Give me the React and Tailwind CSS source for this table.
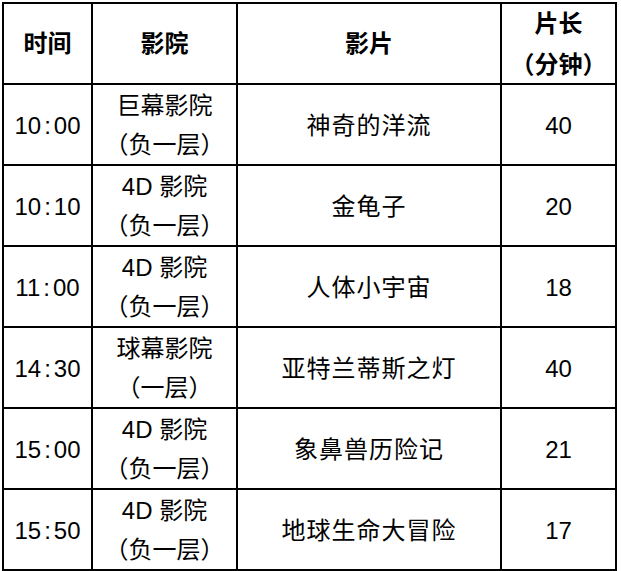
const header = [
  ['时间'],
  ['影院'],
  ['影片'],
  ['片长', '（分钟）'],
];

const rows = [
  { time: '10:00', hall: ['巨幕影院', '（负一层）'], film: '神奇的洋流', len: '40' },
  { time: '10:10', hall: ['4D 影院', '（负一层）'], film: '金龟子', len: '20' },
  { time: '11:00', hall: ['4D 影院', '（负一层）'], film: '人体小宇宙', len: '18' },
  { time: '14:30', hall: ['球幕影院', '（一层）'], film: '亚特兰蒂斯之灯', len: '40' },
  { time: '15:00', hall: ['4D 影院', '（负一层）'], film: '象鼻兽历险记', len: '21' },
  { time: '15:50', hall: ['4D 影院', '（负一层）'], film: '地球生命大冒险', len: '17' },
];

const cjk = "font-['Liberation_Sans','Noto_Sans_CJK_SC',sans-serif]";

const Cell = ({ children, bold }) => (
  <div
    className={`bg-white flex flex-col items-center justify-center text-center text-[24px] leading-[39px] text-black ${cjk} ${bold ? 'font-bold' : ''}`}
  >
    {children}
  </div>
);

const Time = ({ value }) => {
  const [h, m] = value.split(':');
  return (
    <span className="pt-[2px]">
      {h}
      <span className="px-[3px]">:</span>
      {m}
    </span>
  );
};

export default function App() {
  return (
    <div className="w-[621px] h-[571px] bg-white pl-[2px] pt-[2px]">
      <div className="inline-grid grid-cols-[87px_143px_262px_113px] auto-rows-[79px] gap-[2px] bg-black p-[2px]">
        {header.map((lines, i) => (
          <Cell key={i} bold>
            {lines.map((l) => (
              <div key={l} className={lines.length > 1 ? 'leading-[41px]' : ''}>{l}</div>
            ))}
          </Cell>
        ))}
        {rows.map((r) => (
          <>
            <Cell key={r.time + 't'}>
              <Time value={r.time} />
            </Cell>
            <Cell key={r.time + 'h'}>
              {r.hall.map((l) => (
                <div key={l}>{l}</div>
              ))}
            </Cell>
            <Cell key={r.time + 'f'}>
              <div className="tracking-[1px] pt-[2px]">{r.film}</div>
            </Cell>
            <Cell key={r.time + 'l'}>
              <div className="pt-[2px]">{r.len}</div>
            </Cell>
          </>
        ))}
      </div>
    </div>
  );
}
